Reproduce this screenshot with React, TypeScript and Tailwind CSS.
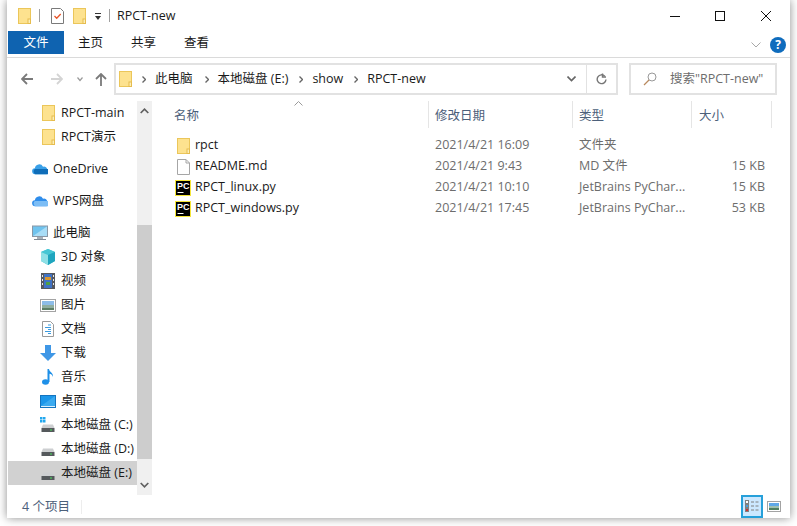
import React from "react";

const F = "font-['Open_Sans','Noto_Sans_CJK_SC',sans-serif]";
const T = "text-[12.5px] text-[#1a1a1a] whitespace-nowrap";

function Folder({ className = "" }: { className?: string }) {
  return (
    <svg width="13" height="16" viewBox="0 0 13 16" className={className}>
      <rect x="0.5" y="0.5" width="12" height="15" fill="#FDE28F" stroke="#EBC65A" />
      <rect x="10" y="11" width="2.5" height="4.5" fill="#FCEFB8" stroke="#E6BC4E" strokeWidth="1" />
    </svg>
  );
}

function PyIcon() {
  return (
    <svg width="16" height="16" viewBox="0 0 16 16">
      <rect x="0.5" y="0.5" width="15" height="15" fill="#000" stroke="#F5E637" />
      <text x="2" y="9" fill="#fff" fontSize="9" fontWeight="700" fontFamily="'Liberation Sans',sans-serif">PC</text>
      <rect x="2.5" y="12" width="6" height="1" fill="#fff" />
    </svg>
  );
}

function Drive({ win = false }: { win?: boolean }) {
  return (
    <svg width="16" height="16" viewBox="0 0 16 16">
      {win && (
        <g fill="#22A7EE">
          <rect x="0" y="0" width="2.5" height="2.5" />
          <rect x="3" y="0" width="2.5" height="2.5" />
          <rect x="0" y="3" width="2.5" height="2.5" />
          <rect x="3" y="3" width="2.5" height="2.5" />
        </g>
      )}
      <path d="M3 7.5h10l1.5 3.5H1.5z" fill="#CDCFD1" />
      <rect x="1.5" y="11" width="13" height="4" fill="#55595C" />
      <rect x="10" y="12.5" width="2" height="1" fill="#47E05A" />
    </svg>
  );
}

const Cube = (
  <svg width="16" height="16" viewBox="0 0 16 16">
    <path d="M8 0l7 3v9l-7 4-7-4V3z" fill="#3DBFCE" />
    <path d="M8 0l7 3-7 3-7-3z" fill="#45C6D4" />
    <path d="M1 3l7 3v10l-7-4z" fill="#8EE0E6" />
    <path d="M8 6v10l7-4V3z" fill="#1FA5BE" />
  </svg>
);
const Video = (
  <svg width="14" height="16" viewBox="0 0 14 16">
    <rect x="0" y="0" width="14" height="16" fill="#55585E" />
    <rect x="3" y="1" width="8" height="14" fill="#3F72C4" />
    <rect x="4" y="4" width="6" height="3" fill="#D9962F" />
    <rect x="5" y="9" width="4" height="3" fill="#4D9F45" />
    <g fill="#E8E8E8">
      <rect x="1" y="2" width="1" height="2" />
      <rect x="1" y="6" width="1" height="2" />
      <rect x="1" y="10" width="1" height="2" />
      <rect x="12" y="2" width="1" height="2" />
      <rect x="12" y="6" width="1" height="2" />
      <rect x="12" y="10" width="1" height="2" />
    </g>
  </svg>
);
const Picture = (
  <svg width="16" height="13" viewBox="0 0 16 13">
    <rect x="0.5" y="0.5" width="15" height="12" fill="#fff" stroke="#A3A3A3" />
    <rect x="2" y="2" width="12" height="4" fill="#8DBDE8" />
    <rect x="2" y="6" width="12" height="3" fill="#8FAEA0" />
    <rect x="2" y="9" width="12" height="2" fill="#5C7F66" />
  </svg>
);
const Doc = (
  <svg width="12" height="16" viewBox="0 0 12 16">
    <path d="M.5.5h8l3 3v12H.5z" fill="#fff" stroke="#9A9A9A" />
    <path d="M6 4h3M3 6.5h6M6 8.5h3M3 10.5h6M6 12.5h3" stroke="#3B9BE0" />
  </svg>
);
const Down = (
  <svg width="16" height="16" viewBox="0 0 16 16">
    <path d="M5 0h6v8h5l-8 8-8-8h5z" fill="#3F97E6" />
  </svg>
);
const Music = (
  <svg width="12" height="16" viewBox="0 0 12 16">
    <ellipse cx="3.5" cy="13" rx="3.5" ry="2.8" fill="#1E90E8" />
    <path d="M5.5 13V0h1.5c.3 3 4.5 3.5 4 8-.7-2.5-2.3-3-3.5-3.2V13z" fill="#1E90E8" />
  </svg>
);
const Desktop = (
  <svg width="16" height="13" viewBox="0 0 16 13">
    <rect x="0.5" y="0.5" width="15" height="12" fill="#1C97EA" stroke="#1474BF" />
    <path d="M1 11L15 1v10z" fill="#3AAAF0" />
    <rect x="1" y="11" width="14" height="1" fill="#DDF0FC" />
  </svg>
);
const Pc = (
  <svg width="16" height="16" viewBox="0 0 16 16">
    <rect x="0.5" y="1" width="15" height="10.5" fill="#6FC3EE" stroke="#8A98A6" />
    <path d="M1 11L15 1.5V11z" fill="#A9DDF6" />
    <rect x="5" y="12" width="6" height="2" fill="#A8B0B8" />
    <rect x="2" y="14" width="12" height="1" fill="#7F8A95" />
  </svg>
);

function Cloud({ fill, fill2 }: { fill: string; fill2: string }) {
  return (
    <svg width="17" height="12" viewBox="0 0 17 12">
      <path d="M3.5 11.5a3.2 3.2 0 01-.4-6.4 4.6 4.6 0 018.6-1.6 3.6 3.6 0 014.6 3.6 2.4 2.4 0 01-1 4.4z" fill={fill} />
      <path d="M3.5 11.5a3.2 3.2 0 01-.4-5.5h13.6a2.4 2.4 0 01-1 5.5z" fill={fill2} />
    </svg>
  );
}

function NavRow({ icon, label, selected, indent = true, mt = "" }: { icon: React.ReactNode; label: string; selected?: boolean; indent?: boolean; mt?: string }) {
  return (
    <div className={`h-6 flex items-center shrink-0 ${mt} ${indent ? "pl-[32px]" : "pl-[24px]"} ${selected ? "bg-[#D1D1D1]" : ""}`}>
      <div className="w-4 h-4 flex items-center justify-center shrink-0">{icon}</div>
      <span className={`${T} ml-[5px] pt-px`}>{label}</span>
    </div>
  );
}

function Header({ label, width, pl }: { label: string; width: string; pl: string }) {
  return (
    <div className={`${width} ${pl} h-[27px] pt-[3px] flex items-center border-r border-[#E5E5E5] text-[12.5px] text-[#4C607A] shrink-0`}>
      {label}
    </div>
  );
}

function FileRow({ icon, name, date, type, size }: { icon: React.ReactNode; name: string; date: string; type: string; size: string }) {
  return (
    <div className="h-[21px] flex items-center text-[12.5px]">
      <div className="w-[278px] flex items-center pl-[23px] text-[#1a1a1a]">
        <div className="w-4 h-4 flex items-center justify-center shrink-0">{icon}</div>
        <span className="ml-[4px]">{name}</span>
      </div>
      <div className="w-[144px] pl-[5px] text-[#6D6D6D]">{date}</div>
      <div className="w-[119px] pl-[5px] text-[#6D6D6D] whitespace-nowrap">{type}</div>
      <div className="w-[72px] text-right text-[#6D6D6D] whitespace-nowrap">{size}</div>
    </div>
  );
}

function Chev({ className }: { className: string }) {
  return (
    <svg width="4" height="7" viewBox="0 0 4 7" className={className}>
      <path d="M.5.5L3.5 3.5.5 6.5" fill="none" stroke="#666" strokeWidth="1.4" />
    </svg>
  );
}

export default function App() {
  return (
    <div className={`w-[797px] h-[526px] overflow-hidden bg-white ${F} pl-[7px]`}>
      <div className="w-[783px] h-[518px] bg-white flex flex-col shadow-[0_0_9px_rgba(0,0,0,0.45)]">
        {/* Title bar */}
        <div className="h-[31px] flex items-center shrink-0 pl-[11px]">
          <Folder />
          <div className="w-px h-[13px] bg-[#A0A0A0] ml-[8px]" />
          <svg width="13" height="16" viewBox="0 0 13 16" className="ml-[11px]">
            <path d="M.5.5h9l3 3v12H.5z" fill="#fff" stroke="#7A7A7A" />
            <path d="M3.5 8l2.2 2.3 4-4.3" fill="none" stroke="#E8562A" strokeWidth="1.3" />
          </svg>
          <Folder className="ml-[9px]" />
          <svg width="6" height="8" viewBox="0 0 6 8" className="ml-[9px] mt-[3px]">
            <rect x="0" y="0" width="6" height="1" fill="#333" />
            <path d="M0 3h6L3 7z" fill="#333" />
          </svg>
          <div className="w-px h-[13px] bg-[#A0A0A0] ml-[8px]" />
          <span className={`ml-[7px] pt-px ${T}`}>RPCT-new</span>
          <div className="flex-1" />
          <svg width="10" height="10" viewBox="0 0 10 10" className="mr-[35px]"><rect x="0" y="5" width="10" height="1" fill="#111" /></svg>
          <svg width="10" height="10" viewBox="0 0 10 10" className="mr-[36px]"><rect x="0.5" y="0.5" width="9" height="9" fill="none" stroke="#111" /></svg>
          <svg width="10" height="10" viewBox="0 0 10 10" className="mr-[19px]"><path d="M0 0l10 10M10 0L0 10" stroke="#111" /></svg>
        </div>
        {/* Ribbon tabs */}
        <div className="h-[27px] flex shrink-0 border-b border-[#DADADA] text-[12.5px] pl-px">
          <div className="w-[56px] h-[23px] pt-[2px] bg-[#0F63B0] text-white flex items-center justify-center">文件</div>
          <div className="w-[53px] h-[23px] pt-[2px] flex items-center justify-center text-[#1a1a1a]">主页</div>
          <div className="w-[53px] h-[23px] pt-[2px] flex items-center justify-center text-[#1a1a1a]">共享</div>
          <div className="w-[53px] h-[23px] pt-[2px] flex items-center justify-center text-[#1a1a1a]">查看</div>
          <div className="flex-1" />
          <svg width="10" height="6" viewBox="0 0 10 6" className="mt-[11px] mr-[9px]"><path d="M.5.5L5 5 9.5.5" fill="none" stroke="#A8A8A8" /></svg>
          <div className="w-4 h-4 rounded-full bg-[#0F6CBD] text-white text-xs font-bold flex items-center justify-center mt-[6px] mr-[4px]">?</div>
        </div>
        {/* Address row */}
        <div className="h-[43px] flex items-center shrink-0 pb-[1px]">
          <svg width="12" height="12" viewBox="0 0 12 12" className="ml-[14px]"><path d="M6 1L1 6l5 5M1 6h11" fill="none" stroke="#7A7A7A" strokeWidth="1.8" /></svg>
          <svg width="12" height="12" viewBox="0 0 12 12" className="ml-[18px]"><path d="M6 1l5 5-5 5M11 6H0" fill="none" stroke="#D4D4D4" strokeWidth="1.8" /></svg>
          <svg width="6" height="5" viewBox="0 0 6 5" className="ml-[14px]"><path d="M.5.5L3 3.5l2.5-3" fill="none" stroke="#999" strokeWidth="1.2" /></svg>
          <svg width="12" height="13" viewBox="0 0 12 13" className="ml-[12px]"><path d="M1 6l5-5 5 5M6 1v12" fill="none" stroke="#7A7A7A" strokeWidth="1.8" /></svg>
          <div className="ml-[7px] w-[504px] h-[32px] border-2 border-[#E2E2E2] flex items-center shrink-0">
            <Folder className="ml-[3px]" />
            <Chev className="ml-[10px]" />
            <span className={`ml-[9px] ${T}`}>此电脑</span>
            <Chev className="ml-[12px]" />
            <span className={`ml-[9px] ${T}`}>本地磁盘 (E:)</span>
            <Chev className="ml-[11px]" />
            <span className={`ml-[9px] ${T}`}>show</span>
            <Chev className="ml-[11px]" />
            <span className={`ml-[9px] ${T}`}>RPCT-new</span>
            <div className="flex-1" />
            <svg width="9" height="6" viewBox="0 0 9 6" className="mr-[10px]"><path d="M.5.5l4 4 4-4" fill="none" stroke="#666" strokeWidth="1.6" /></svg>
            <div className="w-[30px] h-full border-l border-[#E2E2E2] flex items-center justify-center">
              <svg width="11" height="12" viewBox="0 0 11 12"><path d="M8.8 3.2A4.4 4.4 0 1 0 10 6.5" fill="none" stroke="#777" strokeWidth="1.4" /><path d="M6.5 0.5v3.5h3.5" fill="none" stroke="#777" strokeWidth="1.4" /></svg>
            </div>
          </div>
          <div className="ml-[11px] w-[148px] h-[32px] border-2 border-[#E2E2E2] flex items-center shrink-0">
            <svg width="14" height="14" viewBox="0 0 14 14" className="ml-[12px]"><circle cx="9" cy="5" r="4" fill="none" stroke="#999" /><path d="M6 8l-5 5" stroke="#B98A5E" strokeWidth="1.2" /></svg>
            <span className="ml-[13px] text-[12.5px] text-[#6D6D6D] whitespace-nowrap">搜索"RPCT-new"</span>
          </div>
        </div>
        {/* Body */}
        <div className="flex-1 flex min-h-0">
          <div className="w-[130px] flex flex-col shrink-0 pl-px">
            <NavRow icon={<Folder />} label="RPCT-main" />
            <NavRow icon={<Folder />} label="RPCT演示" />
            <NavRow mt="mt-2" indent={false} icon={<Cloud fill="#3AA0E8" fill2="#0F6DB8" />} label="OneDrive" />
            <NavRow mt="mt-2" indent={false} icon={<Cloud fill="#2F8DEB" fill2="#7CBDF5" />} label="WPS网盘" />
            <NavRow mt="mt-2" indent={false} icon={Pc} label="此电脑" />
            <NavRow icon={Cube} label="3D 对象" />
            <NavRow icon={Video} label="视频" />
            <NavRow icon={Picture} label="图片" />
            <NavRow icon={Doc} label="文档" />
            <NavRow icon={Down} label="下载" />
            <NavRow icon={Music} label="音乐" />
            <NavRow icon={Desktop} label="桌面" />
            <NavRow icon={<Drive win />} label="本地磁盘 (C:)" />
            <NavRow icon={<Drive />} label="本地磁盘 (D:)" />
            <NavRow icon={<Drive />} label="本地磁盘 (E:)" selected />
          </div>
          {/* Scrollbar */}
          <div className="w-[15px] h-[394px] bg-[#F0F0F0] flex flex-col shrink-0">
            <div className="h-[124px] flex justify-center pt-[7px]">
              <svg width="9" height="6" viewBox="0 0 9 6"><path d="M.7 5l3.8-3.8L8.3 5" fill="none" stroke="#606060" strokeWidth="1.7" /></svg>
            </div>
            <div className="h-[234px] bg-[#CDCDCD]" />
            <div className="flex-1 flex justify-center items-end pb-[7px]">
              <svg width="9" height="6" viewBox="0 0 9 6"><path d="M.7 1l3.8 3.8L8.3 1" fill="none" stroke="#606060" strokeWidth="1.7" /></svg>
            </div>
          </div>
          {/* File list */}
          <div className="flex-1 flex flex-col min-w-0">
            <div className="flex relative shrink-0">
              <Header label="名称" width="w-[277px]" pl="pl-[22px]" />
              <Header label="修改日期" width="w-[144px]" pl="pl-[6px]" />
              <Header label="类型" width="w-[119px]" pl="pl-[6px]" />
              <Header label="大小" width="w-[80px]" pl="pl-[7px]" />
              <svg width="9" height="5" viewBox="0 0 9 5" className="absolute left-[142px] top-0"><path d="M.5 4.5l4-4 4 4" fill="none" stroke="#9A9A9A" /></svg>
            </div>
            <div className="pt-[7px]">
              <FileRow icon={<Folder />} name="rpct" date="2021/4/21 16:09" type="文件夹" size="" />
              <FileRow
                icon={
                  <svg width="13" height="16" viewBox="0 0 13 16">
                    <path d="M.5.5h8.5l3.5 3.5v11.5H.5z" fill="#fff" stroke="#A6A6A6" />
                    <path d="M9 .5V4h3.5" fill="none" stroke="#A6A6A6" />
                  </svg>
                }
                name="README.md"
                date="2021/4/21 9:43"
                type="MD 文件"
                size="15 KB"
              />
              <FileRow icon={<PyIcon />} name="RPCT_linux.py" date="2021/4/21 10:10" type="JetBrains PyChar..." size="15 KB" />
              <FileRow icon={<PyIcon />} name="RPCT_windows.py" date="2021/4/21 17:45" type="JetBrains PyChar..." size="53 KB" />
            </div>
          </div>
        </div>
        {/* Status bar */}
        <div className="h-[23px] flex items-center shrink-0">
          <span className="ml-[15px] pt-px text-[12.5px] text-[#4C607A]">4 个项目</span>
          <div className="w-px h-[14px] bg-[#EDEDED] ml-[11px]" />
          <div className="flex-1" />
          <div className="w-[22px] h-[23px] bg-[#CCE8FF] border-2 border-[#26A0DA] flex items-center justify-center">
            <svg width="14" height="13" viewBox="0 0 14 13">
              <rect x="0.5" y="0.5" width="3" height="3" fill="#fff" stroke="#808080" />
              <rect x="0.5" y="4.5" width="3" height="3" fill="#4AA0DC" stroke="#808080" />
              <rect x="0.5" y="8.5" width="3" height="3" fill="#D03030" stroke="#808080" />
              <path d="M6 2h3M10.5 2h3M6 6h3M10.5 6h3M6 10h3M10.5 10h3" stroke="#808080" />
            </svg>
          </div>
          <div className="w-[15px] flex justify-center ml-[3px] mr-[9px]">
            <svg width="14" height="11" viewBox="0 0 14 11">
              <rect x="0.5" y="0.5" width="13" height="10" fill="#fff" stroke="#A3A3A3" />
              <rect x="2" y="2" width="10" height="3" fill="#5FA8E8" />
              <rect x="2" y="5" width="10" height="2" fill="#9FC0B0" />
              <rect x="2" y="7" width="10" height="2" fill="#4F7F60" />
            </svg>
          </div>
        </div>
      </div>
    </div>
  );
}
